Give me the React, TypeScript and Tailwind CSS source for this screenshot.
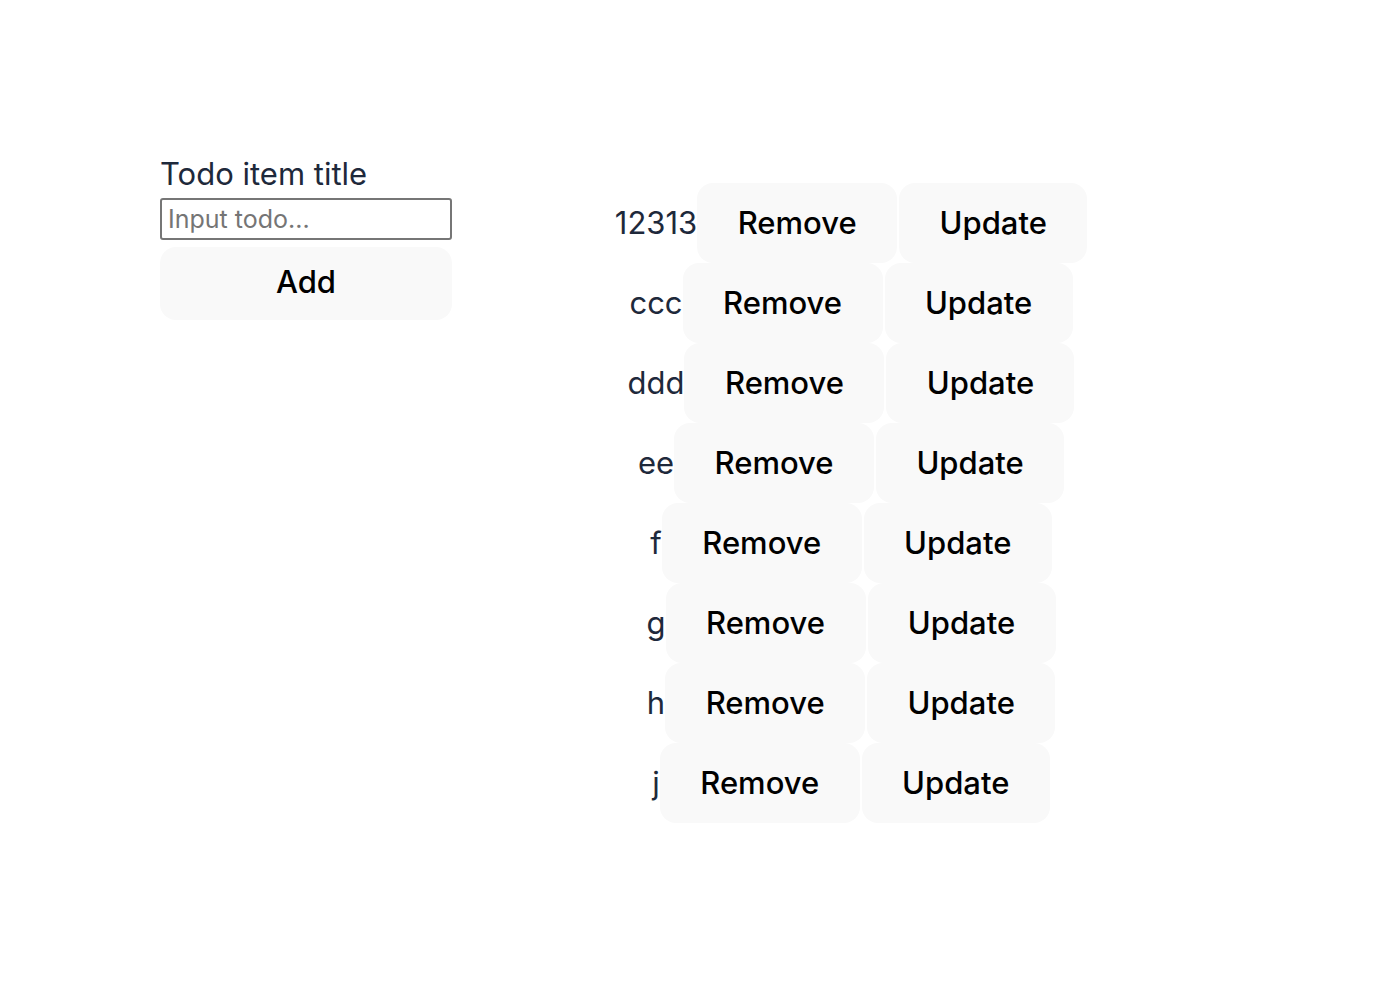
const todos = ["12313", "ccc", "ddd", "ee", "f", "g", "h", "j"]

export default function App() {
  return (
    <div className="min-h-[986px] bg-white font-['Inter',sans-serif] pt-[156px]">
      <div className="flex items-start">
        <div className="ml-[160px] w-[292px] flex flex-col">
          <label className="text-[31px] leading-[36px] text-[#1e293b]">Todo item title</label>
          <input
            className="mt-[6px] h-[42px] w-full border-2 border-[#767676] rounded-[3px] px-[6px] text-[25px] text-black placeholder:text-[#757575] outline-none"
            placeholder="Input todo..."
          />
          <button className="mt-[7px] h-[73px] w-full rounded-[16px] bg-[#f9f9f9] text-[31px] leading-[40px] font-medium text-black pb-[3px]">
            Add
          </button>
        </div>
        <div className="flex-1 mr-[142px] pt-[27px] flex flex-col items-center">
          {todos.map((t) => (
            <div key={t} className="flex items-center h-[80px]">
              <span className="text-[31px] text-[#1e293b]">{t}</span>
              <button className="h-[80px] w-[200px] rounded-[16px] bg-[#f9f9f9] text-[31px] font-medium text-black">
                Remove
              </button>
              <button className="ml-[2px] h-[80px] w-[188px] rounded-[16px] bg-[#f9f9f9] text-[31px] font-medium text-black">
                Update
              </button>
            </div>
          ))}
        </div>
      </div>
    </div>
  )
}
